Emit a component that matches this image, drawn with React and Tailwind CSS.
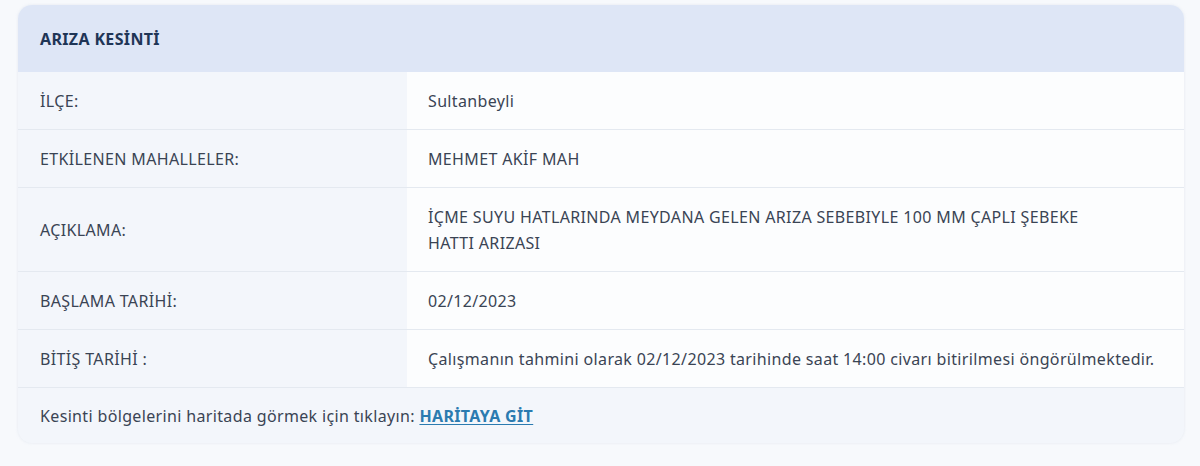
const rows = [
  { label: 'İLÇE:', value: 'Sultanbeyli' },
  { label: 'ETKİLENEN MAHALLELER:', value: 'MEHMET AKİF MAH' },
  { label: 'AÇIKLAMA:', value: 'İÇME SUYU HATLARINDA MEYDANA GELEN ARIZA SEBEBIYLE 100 MM ÇAPLI ŞEBEKE HATTI ARIZASI' },
  { label: 'BAŞLAMA TARİHİ:', value: '02/12/2023' },
  { label: 'BİTİŞ TARİHİ :', value: 'Çalışmanın tahmini olarak 02/12/2023 tarihinde saat 14:00 civarı bitirilmesi öngörülmektedir.' },
];

const App = () => {
  return (
    <div className="min-h-screen bg-[#f7f9fc] pt-[5px] pl-[18px] pr-[16px] font-['Noto_Sans',sans-serif] text-[16px] tracking-[0.35px] text-[#3a4454]">
      <div className="rounded-[14px] overflow-hidden bg-[#f3f6fb] shadow-[0_0_3px_rgba(200,210,225,0.4)]">
        <div className="bg-[#dee6f6] px-[22px] py-[20.5px] leading-[26px] font-bold text-[#1f3556]">ARIZA KESİNTİ</div>

        <div className="grid grid-cols-[389px_1fr]">
          {rows.map((r) => (
            <div key={r.label} className="contents">
              <div className="flex items-center px-[22px] py-[15.5px] leading-[26px] border-b border-[#e4e9f0] bg-[#f3f6fb]">{r.label}</div>
              <div className="flex items-center pl-[21px] pr-[26px] py-[15.5px] leading-[26px] border-b border-[#e4e9f0] bg-[#fcfdfe]">
                <span className={r.label === 'AÇIKLAMA:' ? 'max-w-[680px]' : ''}>{r.value}</span>
              </div>
            </div>
          ))}
        </div>

        <div className="px-[22px] py-[14.5px] leading-[26px]">
          Kesinti bölgelerini haritada görmek için tıklayın:{' '}
          <a href="#" className="font-bold text-[#2b7bb0] underline underline-offset-2">HARİTAYA GİT</a>
        </div>
      </div>
    </div>
  );
};

export default App;
